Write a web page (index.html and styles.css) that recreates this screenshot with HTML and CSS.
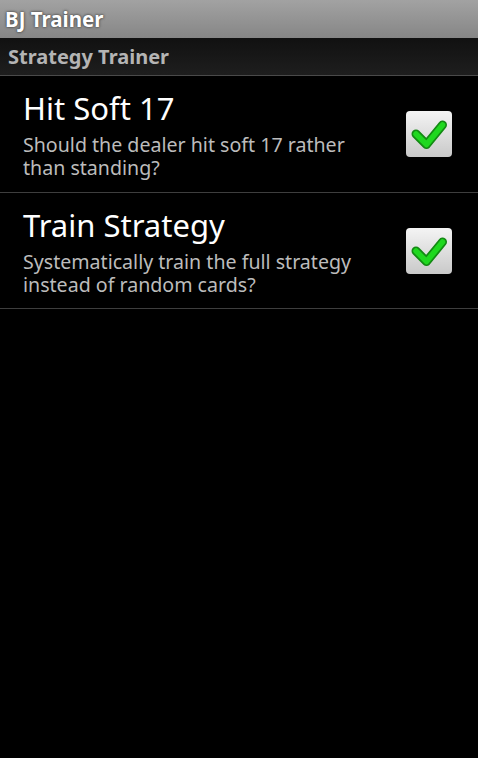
FILE: index.html
```html
<!DOCTYPE html>
<html>
<head>
<meta charset="utf-8">
<link rel="stylesheet" href="styles.css">
</head>
<body>
<div class="titlebar">BJ Trainer</div>
<div class="category">Strategy Trainer</div>
<div class="list">
  <div class="row">
    <div class="text">
      <div class="title">Hit Soft 17</div>
      <div class="summary">Should the dealer hit soft 17 rather than standing?</div>
    </div>
    <div class="checkbox">
      <svg width="46" height="46" viewBox="0 0 46 46">
        <path d="M10 23 L20.5 33.5 L36.5 14" fill="none" stroke="#138a13" stroke-width="9" stroke-linecap="round" stroke-linejoin="round"/>
        <path d="M10 23 L20.5 33.5 L36.5 14" fill="none" stroke="#1fd81f" stroke-width="5.5" stroke-linecap="round" stroke-linejoin="round"/>
      </svg>
    </div>
  </div>
  <div class="row">
    <div class="text">
      <div class="title">Train Strategy</div>
      <div class="summary">Systematically train the full strategy instead of random cards?</div>
    </div>
    <div class="checkbox">
      <svg width="46" height="46" viewBox="0 0 46 46">
        <path d="M10 23 L20.5 33.5 L36.5 14" fill="none" stroke="#138a13" stroke-width="9" stroke-linecap="round" stroke-linejoin="round"/>
        <path d="M10 23 L20.5 33.5 L36.5 14" fill="none" stroke="#1fd81f" stroke-width="5.5" stroke-linecap="round" stroke-linejoin="round"/>
      </svg>
    </div>
  </div>
</div>
</body>
</html>
```
FILE: styles.css
```css
html, body {
  margin: 0;
  padding: 0;
  background: #000;
  font-family: "Noto Sans", "Open Sans", sans-serif;
}
.titlebar {
  height: 38px;
  box-sizing: border-box;
  background: linear-gradient(#a2a2a2, #868686);
  color: #fff;
  font-weight: bold;
  font-size: 20.5px;
  line-height: 38px;
  padding-left: 5px;
  text-shadow: 0 0 3px #444, 0 0 2px #555;
}
.category {
  height: 38px;
  box-sizing: border-box;
  background: linear-gradient(#111111, #1e1e1e);
  color: #b4b4b4;
  font-weight: bold;
  font-size: 20px;
  line-height: 37px;
  padding-left: 8px;
  border-bottom: 1px solid #4a4a4a;
}
.row {
  display: flex;
  align-items: center;
  padding: 12px 26px 13px 23px;
  border-bottom: 1px solid #3e3e3e;
}
.row + .row {
  padding-bottom: 12px;
}
.text {
  flex: 1;
  margin-right: 20px;
}
.title {
  color: #fff;
  font-size: 31px;
  line-height: 40px;
}
.summary {
  margin-top: 5px;
  color: #bcbcbc;
  font-size: 19.6px;
  line-height: 23px;
}
.checkbox {
  width: 46px;
  height: 46px;
  border-radius: 4px;
  background: linear-gradient(#f4f4f4, #c9c9c9);
  flex-shrink: 0;
}
.checkbox svg {
  display: block;
}
```
